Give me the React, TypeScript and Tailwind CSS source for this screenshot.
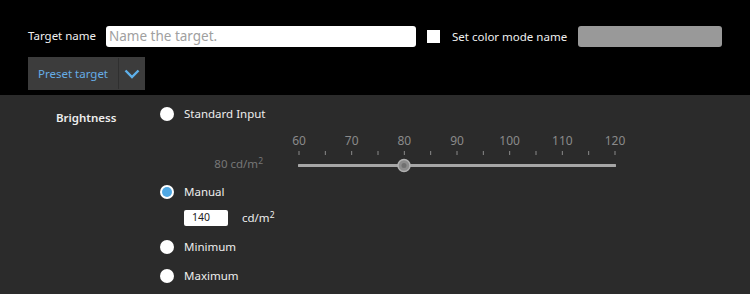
import React from "react";

const font = { fontFamily: '"Noto Sans", "Open Sans", sans-serif' };

function Radio({ checked }: { checked?: boolean }) {
  return checked ? (
    <span className="w-[14px] h-[14px] rounded-full bg-white flex items-center justify-center">
      <span className="w-[10px] h-[10px] rounded-full bg-[#4fa8e4]" />
    </span>
  ) : (
    <span className="w-[14px] h-[14px] rounded-full bg-white" />
  );
}

function Slider() {
  const labels = [60, 70, 80, 90, 100, 110, 120];
  const w = 318;
  const ticks = Array.from({ length: 13 }, (_, i) => (i * (w - 2)) / 12 + 1);
  return (
    <div className="relative w-[318px] h-[44px]">
      {labels.map((l, i) => (
        <span
          key={l}
          className="absolute top-[2px] text-[12px] leading-[16px] text-[#8a8a8a] -translate-x-1/2"
          style={{ left: ticks[i * 2] }}
        >
          {l}
        </span>
      ))}
      <svg className="absolute left-0 top-0" width={w} height={44}>
        {ticks.map((x, i) => (
          <line key={i} x1={x} x2={x} y1={20} y2={24} stroke="#8a8a8a" strokeWidth={1} />
        ))}
        <line x1={1} x2={w - 1} y1={34.5} y2={34.5} stroke="#a6a6a6" strokeWidth={3} strokeLinecap="round" />
        <circle cx={106} cy={34.5} r={6} fill="#8c8c8c" stroke="#b0b0b0" strokeWidth={1.5} />
        <circle cx={106} cy={34.5} r={2.5} fill="#707070" />
      </svg>
    </div>
  );
}

export default function App() {
  return (
    <div className="w-[750px] h-[294px] bg-black flex flex-col" style={font}>
      <div className="h-[95px] pl-[28px] pt-[26px] flex flex-col">
        <div className="flex items-center h-[21px]">
          <span className="text-[11.5px] text-[#f0f0f0] w-[78px] -mt-[2px]">Target name</span>
          <div className="w-[310px] h-[21px] bg-white rounded-[3px] flex items-center px-[3px]">
            <span className="text-[13.5px] text-[#a0a0a0]">Name the target.</span>
          </div>
          <span className="ml-[11px] w-[13px] h-[13px] bg-white" />
          <span className="ml-[12px] w-[126px] text-[11.5px] text-[#f0f0f0]">Set color mode name</span>
          <div className="w-[144px] h-[21px] bg-[#999999] rounded-[3px]" />
        </div>
        <div className="mt-[10px] flex w-[117px] h-[33px] bg-[#3c3c3c]">
          <div className="w-[90px] flex items-center justify-center text-[11.5px] text-[#66ade6]">Preset target</div>
          <div className="w-px bg-[#2f2f2f] my-[1px]" />
          <div className="flex-1 flex items-center justify-center">
            <svg width="16" height="10" viewBox="0 0 16 10">
              <path d="M1.5 1.5 L8 8 L14.5 1.5" fill="none" stroke="#5eb0ea" strokeWidth="2.4" />
            </svg>
          </div>
        </div>
      </div>
      <div className="flex-1 bg-[#2b2b2b] flex pt-[9px]">
        <div className="w-[160px] pl-[56px]">
          <span className="text-[11.5px] font-semibold text-[#eeeeee] leading-[20px]">Brightness</span>
        </div>
        <div className="flex flex-col">
          <div className="flex items-center h-[20px] gap-[10px]">
            <Radio />
            <span className="text-[11.5px] text-[#eeeeee]">Standard Input</span>
          </div>
          <div className="flex mt-[7px] h-[44px]">
            <div className="w-[104px] -ml-[1px] text-right pt-[25px] text-[11.5px] text-[#777777] leading-[16px]">
              80 cd/m<sup className="text-[8.5px]">2</sup>
            </div>
            <div className="ml-[35px]">
              <Slider />
            </div>
          </div>
          <div className="flex items-center h-[20px] gap-[10px] mt-[7px]">
            <Radio checked />
            <span className="text-[11.5px] text-[#eeeeee]">Manual</span>
          </div>
          <div className="flex items-center mt-[8px] ml-[24px] gap-[14px]">
            <div className="w-[44px] h-[16px] bg-white rounded-[2px] flex items-center pl-[8px] text-[10.5px] text-[#222]">140</div>
            <span className="text-[11.5px] text-[#eeeeee] leading-[16px]">cd/m<sup className="text-[8.5px]">2</sup></span>
          </div>
          <div className="flex items-center h-[20px] gap-[10px] mt-[11px]">
            <Radio />
            <span className="text-[11.5px] text-[#eeeeee]">Minimum</span>
          </div>
          <div className="flex items-center h-[20px] gap-[10px] mt-[9px]">
            <Radio />
            <span className="text-[11.5px] text-[#eeeeee]">Maximum</span>
          </div>
        </div>
      </div>
    </div>
  );
}
